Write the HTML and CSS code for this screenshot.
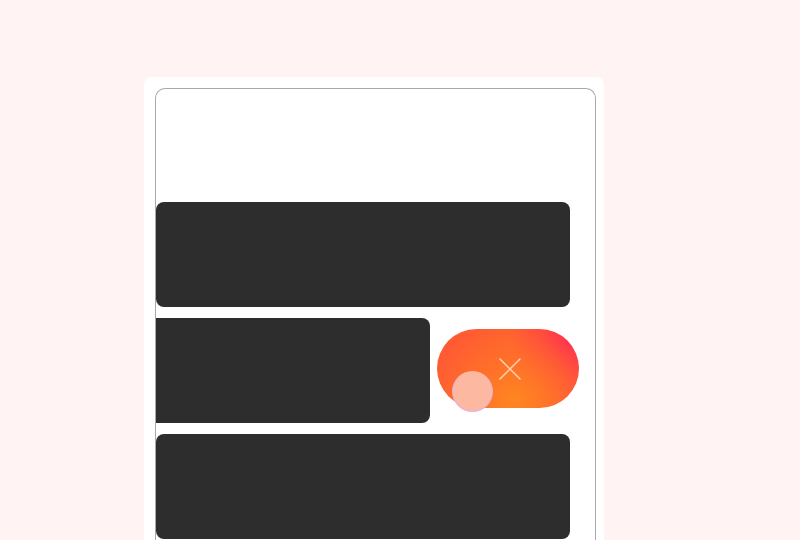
FILE: index.html
```html
<!DOCTYPE html>
<html>
<head>
<meta charset="utf-8">
<link rel="stylesheet" href="styles.css">
</head>
<body>
<div class="card">
  <div class="frame">
    <div class="block wide"></div>
    <div class="row">
      <div class="block half"></div>
      <div class="toggle">
        <svg class="x" width="22" height="22" viewBox="0 0 22 22">
          <path d="M1 1 L21 21 M21 1 L1 21" stroke="#ffd3b4" stroke-width="1.5" fill="none" stroke-linecap="round"/>
        </svg>
        <span class="knob"></span>
      </div>
    </div>
    <div class="block wide"></div>
  </div>
</div>
</body>
</html>
```
FILE: styles.css
```css
* {
  box-sizing: border-box;
}
html, body {
  margin: 0;
  padding: 0;
  background: #fff4f3;
  height: 540px;
  overflow: hidden;
  font-family: "Liberation Sans", sans-serif;
}
.card {
  margin: 77px 0 0 144px;
  width: 460px;
  height: 463px;
  padding: 11px 8px 0 11px;
  background: #ffffff;
  border-radius: 8px 8px 0 0;
  overflow: hidden;
}
.frame {
  border: 1px solid #a9a9a9;
  border-bottom: none;
  border-radius: 10px 10px 0 0;
  height: 452px;
  padding-top: 113px;
  display: flex;
  flex-direction: column;
  gap: 11px;
  overflow: hidden;
}
.block {
  flex: none;
  background: #2d2d2d;
  height: 105px;
  border-radius: 8px;
}
.wide {
  width: 414px;
}
.half {
  width: 274px;
  border-radius: 0 8px 8px 0;
}
.row {
  display: flex;
  align-items: center;
  gap: 7px;
}
.toggle {
  position: relative;
  flex: none;
  width: 142px;
  height: 79px;
  border-radius: 40px;
  margin-top: -4px;
  background:
    radial-gradient(ellipse 70% 110% at 55% 90%, rgba(255,136,32,0.95) 0%, rgba(255,122,36,0.7) 40%, rgba(255,110,40,0) 90%),
    radial-gradient(ellipse 45% 80% at 100% 15%, rgba(255,42,84,1) 0%, rgba(255,50,75,0.55) 50%, rgba(255,60,60,0) 100%),
    linear-gradient(90deg, #ff5a34 0%, #ff5f31 50%, #ff4c42 100%);
  display: flex;
  align-items: center;
  justify-content: center;
}
.x {
  margin-left: 4px;
}
.knob {
  position: absolute;
  left: 15px;
  top: 42px;
  width: 41px;
  height: 41px;
  border-radius: 50%;
  background: #fcb8a1;
  border: 1px solid rgba(225, 175, 235, 0.75);
  border-top-color: #fcb8a1;
}
```
